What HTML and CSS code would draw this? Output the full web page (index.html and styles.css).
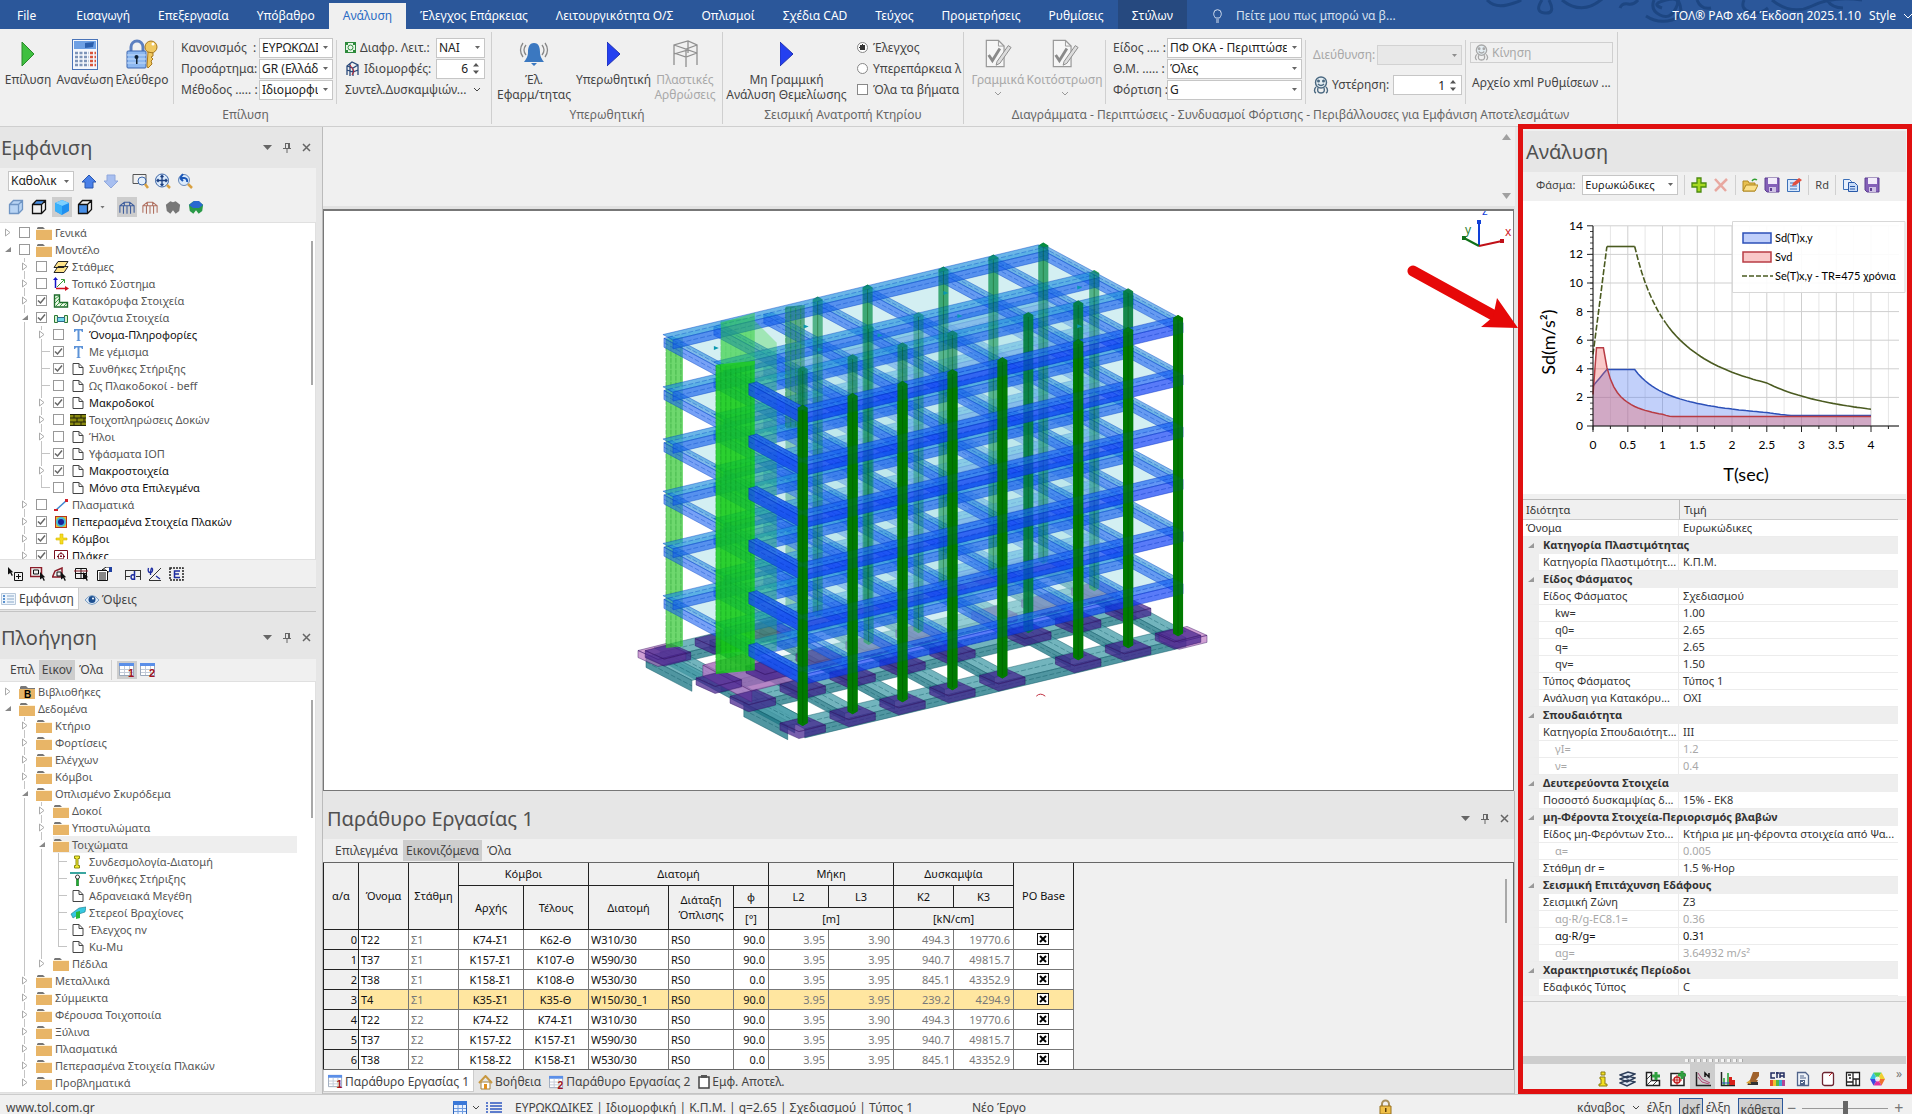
FILE: index.html
```html
<!DOCTYPE html>
<html lang="el">
<head>
<meta charset="utf-8">
<title>ΤΟΛ ΡΑΦ - Ανάλυση</title>
<link rel="stylesheet" href="styles.css">
</head>
<body>
<svg class="defs" aria-hidden="true">
  <symbol id="folder" viewBox="0 0 16 14"><path d="M1 2l1-1h5l2 2h7v2H1z" fill="#777"/><path d="M0 4h16v10H0z" fill="#e8b567"/><path d="M0 3h16v1H0z" fill="#fff3dc"/></symbol>
  <symbol id="bfolder" viewBox="0 0 16 14"><path d="M1 2l1-1h5l2 2h7v2H1z" fill="#777"/><path d="M0 4h16v10H0z" fill="#e8b567"/><text x="5" y="13" font-size="10" font-weight="bold" font-family="Liberation Sans">B</text></symbol>
  <symbol id="page" viewBox="0 0 16 14"><path d="M3 1.500h6l4 4v7H3zM9 1.500v4h4" fill="#fff" stroke="#444"/></symbol>
  <symbol id="tee" viewBox="0 0 16 14"><path d="M4 1h9v3h-1l-1-1.500H9.500V12l1.500 1H6l1.500-1V2.500H6L5 4H4z" fill="#5d93d8"/></symbol>
  <symbol id="levels" viewBox="0 0 16 14"><path d="M5 6.500h10l-4 6H1zM5 1.500h10l-4 6H1z" fill="#ffe48a" stroke="#222"/></symbol>
  <symbol id="axes" viewBox="0 0 16 14"><path d="M2.500 2v9" stroke="#1414c8" stroke-width="1.500"/><path d="M0 3l2.500-3L5 3z" fill="#1414c8"/><path d="M3 11.500h10" stroke="#d01020" stroke-width="1.500"/><path d="M12 9l4 2.500-4 2.500z" fill="#d01020"/><path d="M4 10l7-7M8 2.500h3.500V6" stroke="#3a9a3a" fill="none"/></symbol>
  <symbol id="lwall" viewBox="0 0 16 14"><path d="M1.500 1h5v7.500h8V13h-13z" fill="#e9f7e4" stroke="#1d6b2b" stroke-width="1.400"/><path d="M2 5l4-3M2 9l4-4M3 12l4-4M7 12l3-3M11 12l3-3" stroke="#3c9a46"/></symbol>
  <symbol id="hbeam" viewBox="0 0 16 14"><path d="M1.500 4.500h3v7h-3zM11.500 4.500h3v7h-3z" fill="#d9f2cf" stroke="#2c7a35"/><path d="M4.500 6.500h7v4h-7z" fill="#6fd8ea" stroke="#2c6b8a"/></symbol>
  <symbol id="brick" viewBox="0 0 16 14"><path d="M0 1h16v12H0z" fill="#8a8a10"/><path d="M0 1.500h16M0 5h16M0 9h16M0 12.500h16M4 1v4M11 1v4M7 5v4M14 5v4M4 9v4M11 9v4" stroke="#222208"/></symbol>
  <symbol id="link" viewBox="0 0 16 14"><path d="M3 12L14 2" stroke="#3f86d0" stroke-width="1.500"/><path d="M1 11h4v2H1zM12 1h3v3h-3z" fill="#d0202a"/></symbol>
  <symbol id="fem" viewBox="0 0 16 14"><path d="M2 1h12v12H2z" fill="#b5341c"/><path d="M3 2h10v10H3z" fill="#e8c02a"/><circle cx="8" cy="7" r="5" fill="#44b7d8"/><circle cx="8" cy="7" r="3" fill="#16219a"/></symbol>
  <symbol id="plusy" viewBox="0 0 16 14"><path d="M7 2h3v4h4v2h-4v4H7V8H3V6h4z" fill="#f5dc20" stroke="#d8b800" stroke-width=".6"/></symbol>
  <symbol id="slab" viewBox="0 0 16 14"><path d="M1.500 1.500h13v12h-13z" fill="#fff" stroke="#7a1020"/><circle cx="8" cy="7.500" r="3" fill="none" stroke="#7a1020"/><path d="M8 3v9M4 7.500h8" stroke="#7a1020" stroke-dasharray="2 1"/></symbol>
  <symbol id="isec" viewBox="0 0 16 14"><path d="M4.500 1h5v2.500h-1.500v7h1.500V13h-5v-2.500H6v-7H4.500z" fill="#f4ec30" stroke="#8a8a10"/></symbol>
  <symbol id="support" viewBox="0 0 16 14"><path d="M0 0h16v2H0z" fill="#3aa6a0"/><path d="M6.500 7h2v7h-2z" fill="#20b030" stroke="#107020" stroke-width=".6"/><circle cx="7.500" cy="5" r="2" fill="#fff" stroke="#333"/></symbol>
  <symbol id="rigid" viewBox="0 0 16 14"><path d="M1 8l8-6 7-1-1 5-6 2-6 4z" fill="#36c8e0" stroke="#187888" stroke-width=".6"/><path d="M6 6l4-1v7l-4 1z" fill="#25b838"/></symbol>
  <symbol id="sheet" viewBox="0 0 16 16"><path d="M.5 1.500h14v12H.5z" fill="#fff" stroke="#9aa8bb"/><path d="M0 1h15v3H0z" fill="#5b8fe8"/><path d="M1 7.500h13M1 10.500h13M5.500 4v9M10.500 4v9" stroke="#c3cbd8"/></symbol>
  <symbol id="sheetblue" viewBox="0 0 14 14"><path d="M.5.500h13v13H.5z" fill="#eaf2fe" stroke="#2c62b8"/><path d="M0 0h14v4H0z" fill="#3a78d8"/><path d="M1 7.500h12M1 10.500h12M5 4v9M9.500 4v9" stroke="#6f9ce0"/></symbol>
  <symbol id="sheet1" viewBox="0 0 16 16"><use href="#sheet"/><text x="9" y="15" font-size="11" font-weight="bold" fill="#a01420" font-family="Liberation Sans">1</text></symbol>
  <symbol id="sheet2" viewBox="0 0 16 16"><use href="#sheet"/><text x="9" y="15" font-size="11" font-weight="bold" fill="#a01420" font-family="Liberation Sans">2</text></symbol>
  <symbol id="cube" viewBox="0 0 16 16"><path d="M1.500 5.500l4-4h9v9l-4 4h-9zM1.500 5.500h9v9M10.500 5.500l4-4" stroke-width="1.300"/></symbol>
  <symbol id="floppy" viewBox="0 0 16 16"><path d="M1 1h14v14H3l-2-2z" fill="#8460b8" stroke="#5c3f90"/><path d="M4 1h9v6H4z" fill="#f2ecfa"/><path d="M5 10h7v5H5z" fill="#cfc2e4"/><path d="M6 11h2v3H6z" fill="#5c3f90"/></symbol>
  <symbol id="sheetpen" viewBox="0 0 30 32"><path d="M2.500 1.500h13l6 6v22h-19z" fill="#f6f6f6" stroke="#999" stroke-width="1.300"/><path d="M15.500 1.500v6h6" fill="none" stroke="#999"/><path d="M5 17l4 6 8-13" fill="none" stroke="#8a8a8a" stroke-width="3"/><path d="M14 24L26 7l3 2-12 17-4 2z" fill="#ddd" stroke="#888"/></symbol>
  <symbol id="ghost" viewBox="0 0 16 18"><circle cx="8" cy="6.500" r="5.500" fill="#e4edf2" stroke="currentColor" stroke-width="1.400"/><circle cx="5.500" cy="5" r="1.500" fill="currentColor"/><circle cx="10.500" cy="5" r="1.500" fill="currentColor"/><path d="M5 8c2 2 4 2 6 0M3 11c-2 2-2 5 0 6M13 11c2 2 2 5 0 6M5 12c-1 3 0 5 3 5s4-2 3-5" stroke="currentColor" fill="none" stroke-width="1.400"/></symbol>
  <symbol id="pin" viewBox="0 0 10 12"><path d="M3 1.500h4M3.500 1v5M6.500 1v5M7.500 1v5M1 6.500h8M5 7v4" stroke="#666" fill="none"/></symbol>
  <symbol id="shell" viewBox="0 0 18 16"><path d="M1 5l5-4 3 1 3-1 5 4-1 7-4 3-3-4-3 4-4-3z"/></symbol>
  <symbol id="frame" viewBox="0 0 18 16"><path d="M1 14V6l5-4h6l5 4v8M1 6h16M6 2v4M12 2v4M5 6v9M9 6v9M13 6v9" fill="none" stroke-width="1.200"/></symbol>
  <symbol id="cursor" viewBox="0 0 8 12"><path d="M0 0l7 7H4.500l2 4-1.500 1-2-4L0 10z" fill="#111"/></symbol>
</svg>

<header class="topbar">
  <svg class="swirl" viewBox="0 0 430 29" aria-hidden="true"><g fill="none" stroke="#1d4682" stroke-width="3"><path d="M5 0q8 8 20 5t14-5M60 0q-8 12 3 13t4-13M80 0q20 16 40-1M138 8q2-5 8-4t10-4M172 0q-4 10 6 15t16-7-10-8-4 8M196 0q8 16-6 20t-26-4M215 0q4 10 14 8M262 0q-4 9 6 12t18-4M290 0q20 16 40 6t50-6M345 0q5 8 16 8"/></g></svg>
  <nav class="tabs">
    <button class="file">File</button><button>Εισαγωγή</button><button>Επεξεργασία</button><button>Υπόβαθρο</button><button class="active">Ανάλυση</button><button>Έλεγχος Επάρκειας</button><button>Λειτουργικότητα Ο/Σ</button><button>Οπλισμοί</button><button>Σχέδια CAD</button><button>Τεύχος</button><button>Προμετρήσεις</button><button>Ρυθμίσεις</button><button class="context">Στύλων</button>
  </nav>
  <label class="tell"><svg width="9" height="14" viewBox="0 0 9 14"><path d="M2.500 9C1 7 .7 6 .7 4.500a3.800 3.800 0 017.600 0C8.300 6 8 7 6.500 9zM3 11h3M3 13h3" fill="none" stroke="#d5e0f0"/></svg><input type="text" value="Πείτε μου πως μπορώ να β..." aria-label="Αναζήτηση"></label>
  <div class="product"><span>ΤΟΛ® ΡΑΦ x64 Έκδοση 2025.1.10</span><button>Style</button><svg width="8" height="8" viewBox="0 0 8 8"><path d="M0 2l4 4 4-4" fill="none" stroke="#fff"/></svg></div>
</header>

<section class="ribbon" aria-label="Κορδέλα">
  <div class="group g1">
    <div class="group-body">
      <button class="big w56"><svg width="14" height="26" viewBox="0 0 14 26"><path d="M1 1l12 12L1 25z" fill="#3fc040" stroke="#2a8a2a"/></svg><span>Επίλυση</span></button>
      <button class="big w60"><svg width="26" height="31" viewBox="0 0 26 31"><rect x=".5" y=".5" width="25" height="30" fill="#f4f7fc" stroke="#4a74b8"/><path d="M2 2h22v8H2z" fill="#6ea0e4"/><path d="M13 4l9-1-1 5-8 1z" fill="#2b5fae"/><g stroke-width="2.500" stroke-dasharray="3 1.500"><path d="M3 14h14M3 18h14M3 22h14M3 26h14" stroke="#7d94b8"/><path d="M18 14h6M18 18h6M18 22h6M18 26h6" stroke="#d8543c"/></g></svg><span>Ανανέωση</span></button>
      <button class="big w54"><svg width="32" height="31" viewBox="0 0 32 31"><path d="M5 13V8a6 6 0 0112 0v5" fill="none" stroke="#5b7fc0" stroke-width="3"/><rect x="1" y="12" width="19" height="17" rx="1" fill="#8db8f0" stroke="#3c66b0"/><path d="M1 16h19M1 20h19M1 24h19" stroke="#c4dcfa"/><circle cx="10.500" cy="18" r="2" fill="#123"/><path d="M10 18h1.500v7H10z" fill="#123"/><circle cx="25" cy="8" r="6" fill="#f0c860" stroke="#a8781c"/><circle cx="27" cy="5" r="1.500" fill="#fff"/><path d="M22 13l5 1v3l-2 1 2 2-2 2 1 3-4 4-1-2z" fill="#f0c860" stroke="#a8781c"/></svg><span>Ελεύθερο</span></button>
      <i class="sep"></i>
      <div class="fields f1">
        <label for="reg">Κανονισμός&nbsp; :</label><select id="reg"><option>ΕΥΡΩΚΩΔΙΚΕΣ</option></select>
        <label for="app">Προσάρτημα:</label><select id="app"><option>GR (Ελλάδα)</option></select>
        <label for="met">Μέθοδος ..... :</label><select id="met"><option>Ιδιομορφική</option></select>
      </div>
      <i class="sep"></i>
      <div class="fields f2">
        <label for="dia"><svg width="11" height="11" viewBox="0 0 11 11"><path d="M.5.5h10v10H.5z" fill="#e8f6e8" stroke="#2d8a3c"/><circle cx="5.500" cy="5.500" r="2.500" fill="none" stroke="#2d8a3c"/><path d="M0 0h3v3H0zM8 0h3v3H8zM0 8h3v3H0zM8 8h3v3H8z" fill="#2d8a3c"/></svg>Διαφρ. Λειτ.:</label><select id="dia"><option>ΝΑΙ</option></select>
        <label for="modes"><svg width="15" height="16" viewBox="0 0 15 16"><path d="M2 14V5l5-4 6 3v10M2 5l6 2 5-3M8 7v8M5 2v13M2 9l6 2 5-2" fill="none" stroke="#2a4a7a" stroke-width="1.300"/><path d="M5 4l4 6-2 4" fill="none" stroke="#c02030"/></svg>Ιδιομορφές:</label><input id="modes" class="spin" value="6">
        <button class="drop">Συντελ.Δυσκαμψιών...<svg width="8" height="6" viewBox="0 0 8 6"><path d="M1 1l3 3 3-3" fill="none" stroke="#444"/></svg></button>
      </div>
    </div>
    <h2>Επίλυση</h2>
  </div>
  <div class="group g2">
    <div class="group-body">
      <button class="big w80"><svg width="30" height="26" viewBox="0 0 30 26"><path d="M15 2c5 0 6 5 6 9 0 5 2 7 4 10H5c2-3 4-5 4-10 0-4 1-9 6-9zM12 22h6l-3 3z" fill="#3b78c0"/><path d="M7 4q-4 5 0 10M4 2q-5 7 0 14M23 4q4 5 0 10M26 2q5 7 0 14" fill="none" stroke="#888" stroke-width="1.300"/></svg><span>Έλ.<br>Εφαρμ/τητας</span></button>
      <button class="big w78"><svg width="13" height="26" viewBox="0 0 13 26"><path d="M0 1l13 12L0 25z" fill="#2440f0" stroke="#2030b0"/></svg><span>Υπερωθητική</span></button>
      <button class="big w64" disabled><svg width="26" height="28" viewBox="0 0 26 28"><path d="M2 25V5L16 1l9 4v20M2 5l12 4 11-4M14 9v18M2 13l12 4 11-4M16 1v12M2 14l14-4 9 3" fill="none" stroke="#909090" stroke-width="1.300"/></svg><span>Πλαστικές<br>Αρθρώσεις</span></button>
    </div>
    <h2>Υπερωθητική</h2>
  </div>
  <div class="group g3">
    <div class="group-body">
      <button class="big w126"><svg width="13" height="26" viewBox="0 0 13 26"><path d="M0 1l13 12L0 25z" fill="#2440f0" stroke="#2030b0"/></svg><span>Μη Γραμμική<br>Ανάλυση Θεμελίωσης</span></button>
      <div class="radios">
        <label><input type="radio" name="m" checked>Έλεγχος</label>
        <label><input type="radio" name="m">Υπερεπάρκεια λ</label>
        <label><input type="checkbox">Όλα τα βήματα</label>
      </div>
    </div>
    <h2>Σεισμική Ανατροπή Κτηρίου</h2>
  </div>
  <div class="group g4">
    <div class="group-body">
      <button class="big w60" disabled><svg width="28" height="30"><use href="#sheetpen"/></svg><span>Γραμμικά</span><svg width="8" height="6" viewBox="0 0 8 6"><path d="M1 1l3 3 3-3" fill="none" stroke="#999"/></svg></button>
      <button class="big w78" disabled><svg width="28" height="30"><use href="#sheetpen"/></svg><span>Κοιτόστρωση</span><svg width="8" height="6" viewBox="0 0 8 6"><path d="M1 1l3 3 3-3" fill="none" stroke="#999"/></svg></button>
      <i class="sep"></i>
      <div class="fields f3">
        <label for="kind">Είδος .... :</label><select id="kind"><option>ΠΦ ΟΚΑ - Περιπτώσεις</option></select>
        <label for="thm">Θ.Μ. ..... :</label><select id="thm"><option>Όλες</option></select>
        <label for="load">Φόρτιση :</label><select id="load"><option>G</option></select>
      </div>
      <i class="sep"></i>
      <div class="fields f4">
        <label for="dir" class="off">Διεύθυνση:</label><select id="dir" disabled><option></option></select>
        <label for="hys"><svg class="ghost" width="16" height="18"><use href="#ghost"/></svg>Υστέρηση:</label><input id="hys" class="spin" value="1">
      </div>
      <i class="sep"></i>
      <div class="stack">
        <button class="move" disabled><svg width="15" height="17"><use href="#ghost"/></svg>Κίνηση</button>
        <button class="xml">Αρχείο xml Ρυθμίσεων ...</button>
      </div>
    </div>
    <h2>Διαγράμματα - Περιπτώσεις - Συνδυασμοί Φόρτισης - Περιβάλλουσες για Εμφάνιση Αποτελεσμάτων</h2>
  </div>
</section>

<main class="work">
  <aside class="left">
    <section class="pane view-pane">
      <header class="pane-title"><h1>Εμφάνιση</h1><div class="ctl"><button aria-label="Μενού" class="tri"></button><button aria-label="Καρφίτσωμα"><svg width="10" height="12"><use href="#pin"/></svg></button><button aria-label="Κλείσιμο"><svg width="9" height="9" viewBox="0 0 9 9"><path d="M1 1l7 7M8 1L1 8" stroke="#666" stroke-width="1.500"/></svg></button></div></header>
      <div class="tools">
        <div class="tool-row">
          <select class="scope" aria-label="Εύρος"><option>Καθολικ</option></select>
          <button><svg width="16" height="15" viewBox="0 0 16 15"><path d="M8 1l7 7h-3v6H4V8H1z" fill="#4a80e8" stroke="#2a58b0"/></svg></button>
          <button><svg width="16" height="15" viewBox="0 0 16 15"><path d="M8 14l7-7h-3V1H4v6H1z" fill="#a8bff0" stroke="#90a8dc"/></svg></button>
          <button class="gap8"><svg width="17" height="16" viewBox="0 0 17 16"><path d="M1 1.500h13v9H1z" fill="none" stroke="#555"/><circle cx="10" cy="8" r="4" fill="#e4f0fc" stroke="#3c66a8"/><path d="M13 11l3 4" stroke="#d8a040" stroke-width="2.500"/></svg></button>
          <button><svg width="17" height="16" viewBox="0 0 17 16"><circle cx="8" cy="7.500" r="6.500" fill="#dcebfc" stroke="#3c66a8"/><path d="M8 2.500v10M3 7.500h10M6.500 4L8 2.500 9.500 4M6.500 11L8 12.500 9.500 11M4.500 6L3 7.500 4.500 9M11.500 6L13 7.500 11.500 9" stroke="#1c3f80" stroke-width="1.300" fill="none"/><path d="M13 12l3 3" stroke="#d8a040" stroke-width="2.500"/></svg></button>
          <button><svg width="17" height="16" viewBox="0 0 17 16"><circle cx="8" cy="7" r="5.500" fill="#dcebfc" stroke="#6888b8"/><path d="M4 5h4a3 3 0 013 4M4 5l3-4M4 5l3 3" stroke="#1c58b8" stroke-width="2" fill="none"/><path d="M12 11l4 4" stroke="#d8a040" stroke-width="2.500"/></svg></button>
        </div>
        <div class="tool-row cubes">
          <button><svg width="16" height="16" fill="#b8d4f4" stroke="#6f95c4"><use href="#cube"/></svg></button>
          <button><svg width="16" height="16" fill="none" stroke="#111"><path d="M2 5l4-3h8l-4 3z" fill="#4890e8" stroke="none"/><use href="#cube"/></svg></button>
          <button class="on"><svg width="18" height="17" viewBox="0 0 18 17"><path d="M9 1l7 3v8l-7 4-7-4V4z" fill="#1f90f0"/><path d="M9 1l7 3-7 3-7-3z" fill="#7cd0ff"/><path d="M2 4l7 3v9l-7-4z" fill="#38b0fa"/></svg></button>
          <button><svg width="16" height="16" fill="none" stroke="#111"><path d="M2 6h9v9H2z" fill="#4890e8" stroke="none"/><use href="#cube"/></svg></button>
          <i class="tiny"></i>
          <button class="on gap8"><svg width="16" height="15" stroke="#3c5c9c"><use href="#frame"/></svg></button>
          <button><svg width="16" height="15" stroke="#b07060"><use href="#frame"/></svg></button>
          <button><svg width="16" height="15" fill="#777"><use href="#shell"/></svg></button>
          <button><svg width="16" height="15" fill="#2a9a48"><use href="#shell"/><path d="M1 5l5-4h5l4 4-4 3H5z" fill="#2a68d0"/></svg></button>
        </div>
      </div>
      <div class="tree view-tree">
        <ul>
          <li><i class="tw c"></i><label><input type="checkbox"><svg><use href="#folder"/></svg>Γενικά</label></li>
          <li><i class="tw o"></i><label><input type="checkbox"><svg><use href="#folder"/></svg>Μοντέλο</label>
            <ul>
              <li><i class="tw c"></i><label><input type="checkbox"><svg><use href="#levels"/></svg>Στάθμες</label></li>
              <li><i class="tw c"></i><label><input type="checkbox"><svg><use href="#axes"/></svg>Τοπικό Σύστημα</label></li>
              <li><i class="tw c"></i><label><input type="checkbox" checked><svg><use href="#lwall"/></svg>Κατακόρυφα Στοιχεία</label></li>
              <li><i class="tw o"></i><label><input type="checkbox" checked><svg><use href="#hbeam"/></svg>Οριζόντια Στοιχεία</label>
                <ul>
                  <li><i class="tw c"></i><label class="dark"><input type="checkbox"><svg><use href="#tee"/></svg>Όνομα-Πληροφορίες</label></li>
                  <li><i class="tw l"></i><label><input type="checkbox" checked><svg><use href="#tee"/></svg>Με γέμισμα</label></li>
                  <li><i class="tw l"></i><label><input type="checkbox" checked><svg><use href="#page"/></svg>Συνθήκες Στήριξης</label></li>
                  <li><i class="tw l"></i><label><input type="checkbox"><svg><use href="#page"/></svg>Ως Πλακοδοκοί - beff</label></li>
                  <li><i class="tw c"></i><label class="dark"><input type="checkbox" checked><svg><use href="#page"/></svg>Μακροδοκοί</label></li>
                  <li><i class="tw c"></i><label><input type="checkbox"><svg><use href="#brick"/></svg>Τοιχοπληρώσεις Δοκών</label></li>
                  <li><i class="tw c"></i><label><input type="checkbox"><svg><use href="#page"/></svg>Ήλοι</label></li>
                  <li><i class="tw l"></i><label><input type="checkbox" checked><svg><use href="#page"/></svg>Υφάσματα ΙΟΠ</label></li>
                  <li><i class="tw c"></i><label class="dark"><input type="checkbox" checked><svg><use href="#page"/></svg>Μακροστοιχεία</label></li>
                  <li><i class="tw l"></i><label class="dark"><input type="checkbox"><svg><use href="#page"/></svg>Μόνο στα Επιλεγμένα</label></li>
                </ul>
              </li>
              <li><i class="tw c"></i><label><input type="checkbox"><svg><use href="#link"/></svg>Πλασματικά</label></li>
              <li><i class="tw c"></i><label class="dark"><input type="checkbox" checked><svg><use href="#fem"/></svg>Πεπερασμένα Στοιχεία Πλακών</label></li>
              <li><i class="tw c"></i><label class="dark"><input type="checkbox" checked><svg><use href="#plusy"/></svg>Κόμβοι</label></li>
              <li><i class="tw c"></i><label class="dark"><input type="checkbox" checked><svg><use href="#slab"/></svg>Πλάκες</label></li>
            </ul>
          </li>
        </ul>
      </div>
      <div class="select-tools">
        <button><svg width="16" height="14" viewBox="0 0 16 14"><use href="#cursor" width="6" height="9"/><path d="M6.500 5.500h8v8h-8zM10.500 7v5M8 9.500h5" fill="none" stroke="#111"/></svg></button>
        <button><svg width="16" height="14" viewBox="0 0 16 14"><path d="M.5.500h11v9H.5z" fill="none" stroke="#8a1c28" stroke-width="1.500"/><path d="M3.500 3h5v4h-5z" fill="none" stroke="#111"/><use href="#cursor" x="10" y="5" width="6" height="9"/></svg></button>
        <button><svg width="16" height="14" viewBox="0 0 16 14"><path d="M.5 10L3 4l7-3v9z" fill="none" stroke="#8a1c28" stroke-width="1.500"/><path d="M5 5h4v4H5z" fill="none" stroke="#111"/><use href="#cursor" x="9" y="5" width="6" height="9"/></svg></button>
        <button><svg width="16" height="14" viewBox="0 0 16 14"><path d="M1.500 1.500h11v10h-11zM1.500 6.500h11M7 1.500v10" fill="none" stroke="#111"/><path d="M0 4h14" stroke="#8a1c28"/><use href="#cursor" x="9" y="5" width="6" height="9"/></svg></button>
        <button><svg width="16" height="14" viewBox="0 0 16 14"><path d="M1.500 3.500h10v10h-10zM3 6h7M3 8h7M3 10h7M3 12h7" fill="#fff" stroke="#111"/><path d="M6 3l4-3h5v4l-3 1-2-2z" fill="#fff" stroke="#111"/><path d="M13 0h3v5h-3z" fill="#2040a0"/></svg></button>
        <button class="gap8"><svg width="16" height="14" viewBox="0 0 16 14"><path d="M.5 3v10M15.500 3v10M1 3.500h14M1 9.500h4M11 9.500h4" stroke="#333" fill="none"/><path d="M9.500 4v9M9 12c-4 2-4-6 0-4" stroke="#1c2ca0" stroke-width="1.500" fill="none"/></svg></button>
        <button><svg width="16" height="14" viewBox="0 0 16 14"><path d="M2 13L14 1M2 13.500h12" stroke="#333"/><path d="M1.500 1c-2 6 5 6 4 1-1-2-2 0-2 6M9 9l4 3" stroke="#1c2ca0" stroke-width="1.300" fill="none"/></svg></button>
        <button><svg width="16" height="14" viewBox="0 0 16 14"><path d="M1 1h13v12H1z" fill="none" stroke="#222" stroke-dasharray="2 1" stroke-width="1.500"/><path d="M11 4H5.500v6.500H11M5.500 7H10" stroke="#1c2ca0" stroke-width="1.500" fill="none"/></svg></button>
      </div>
      <div class="ptabs"><button class="active"><svg width="15" height="12" viewBox="0 0 15 12"><path d="M.5.500h14v11H.5z" fill="#eef5fc" stroke="#b8c8da"/><path d="M2 3h2M2 6h2M2 9h2" stroke="#2a70c0" stroke-width="1.500"/><path d="M6 3h7M6 6h7M6 9h7" stroke="#8aa8c8"/></svg>Εμφάνιση</button><button><svg width="14" height="12" viewBox="0 0 14 12"><path d="M0 6q7-9 14 0-7 9-14 0z" fill="#dceaf8" stroke="#7fa0c4"/><circle cx="7" cy="5.500" r="3.500" fill="#1d4f90"/><circle cx="8" cy="4.500" r="1" fill="#fff"/></svg>Όψεις</button></div>
    </section>
    <section class="pane nav-pane">
      <header class="pane-title"><h1>Πλοήγηση</h1><div class="ctl"><button aria-label="Μενού" class="tri"></button><button aria-label="Καρφίτσωμα"><svg width="10" height="12"><use href="#pin"/></svg></button><button aria-label="Κλείσιμο"><svg width="9" height="9" viewBox="0 0 9 9"><path d="M1 1l7 7M8 1L1 8" stroke="#666" stroke-width="1.500"/></svg></button></div></header>
      <div class="nav-tools"><button>Επιλ</button><button class="on">Εικον</button><button>Όλα</button><i class="sep"></i><button class="on ico"><svg width="16" height="16"><use href="#sheet1"/></svg></button><button class="ico"><svg width="16" height="16"><use href="#sheet2"/></svg></button></div>
      <div class="tree nav-tree">
        <ul>
          <li><i class="tw c"></i><a href="#"><svg><use href="#bfolder"/></svg>Βιβλιοθήκες</a></li>
          <li><i class="tw o"></i><a href="#"><svg><use href="#folder"/></svg>Δεδομένα</a>
            <ul>
              <li><i class="tw c"></i><a href="#"><svg><use href="#folder"/></svg>Κτήριο</a></li>
              <li><i class="tw c"></i><a href="#"><svg><use href="#folder"/></svg>Φορτίσεις</a></li>
              <li><i class="tw c"></i><a href="#"><svg><use href="#folder"/></svg>Ελέγχων</a></li>
              <li><i class="tw c"></i><a href="#"><svg><use href="#folder"/></svg>Κόμβοι</a></li>
              <li><i class="tw o"></i><a href="#"><svg><use href="#folder"/></svg>Οπλισμένο Σκυρόδεμα</a>
                <ul>
                  <li><i class="tw c"></i><a href="#"><svg><use href="#folder"/></svg>Δοκοί</a></li>
                  <li><i class="tw c"></i><a href="#"><svg><use href="#folder"/></svg>Υποστυλώματα</a></li>
                  <li><i class="tw o"></i><a href="#" class="sel"><svg><use href="#folder"/></svg>Τοιχώματα</a>
                    <ul>
                      <li><i class="tw l"></i><a href="#"><svg><use href="#isec"/></svg>Συνδεσμολογία-Διατομή</a></li>
                      <li><i class="tw l"></i><a href="#"><svg><use href="#support"/></svg>Συνθήκες Στήριξης</a></li>
                      <li><i class="tw l"></i><a href="#"><svg><use href="#page"/></svg>Αδρανειακά Μεγέθη</a></li>
                      <li><i class="tw l"></i><a href="#"><svg><use href="#rigid"/></svg>Στερεοί Βραχίονες</a></li>
                      <li><i class="tw l"></i><a href="#"><svg><use href="#page"/></svg>Έλεγχος nv</a></li>
                      <li><i class="tw l"></i><a href="#"><svg><use href="#page"/></svg>Ku-Mu</a></li>
                    </ul>
                  </li>
                  <li><i class="tw c"></i><a href="#"><svg><use href="#folder"/></svg>Πέδιλα</a></li>
                </ul>
              </li>
              <li><i class="tw c"></i><a href="#"><svg><use href="#folder"/></svg>Μεταλλικά</a></li>
              <li><i class="tw c"></i><a href="#"><svg><use href="#folder"/></svg>Σύμμεικτα</a></li>
              <li><i class="tw c"></i><a href="#"><svg><use href="#folder"/></svg>Φέρουσα Τοιχοποιία</a></li>
              <li><i class="tw c"></i><a href="#"><svg><use href="#folder"/></svg>Ξύλινα</a></li>
              <li><i class="tw c"></i><a href="#"><svg><use href="#folder"/></svg>Πλασματικά</a></li>
              <li><i class="tw c"></i><a href="#"><svg><use href="#folder"/></svg>Πεπερασμένα Στοιχεία Πλακών</a></li>
              <li><i class="tw c"></i><a href="#"><svg><use href="#folder"/></svg>Προβληματικά</a></li>
            </ul>
          </li>
        </ul>
      </div>
    </section>
  </aside>

  <section class="center">
    <div class="strip"><i class="up"></i><i class="down"></i></div>
    <div class="canvas">
      <svg id="model" viewBox="0 0 1188 580" preserveAspectRatio="xMidYMid meet" role="img" aria-label="Τρισδιάστατο προσομοίωμα κτηρίου"></svg>
      <svg class="triad" width="58" height="40" viewBox="0 0 58 40"><path d="M24 35V12" stroke="#1040d8" stroke-width="2"/><path d="M22 9h4v4h-4z" fill="#1040d8"/><path d="M24 35L9 27" stroke="#107018" stroke-width="2"/><path d="M7 25h4v4H7z" fill="#107018"/><path d="M24 35l23-5" stroke="#c01018" stroke-width="2"/><path d="M45 28h4v4h-4z" fill="#c01018"/><text x="10" y="23" fill="#2a8030">y</text><text x="50" y="25" fill="#d02028">x</text><text x="27" y="4" fill="#1040d8">z</text></svg>
    </div>
    <section class="workwin">
      <header class="pane-title"><h1>Παράθυρο Εργασίας 1</h1><div class="ctl"><button aria-label="Μενού" class="tri"></button><button aria-label="Καρφίτσωμα"><svg width="10" height="12"><use href="#pin"/></svg></button><button aria-label="Κλείσιμο"><svg width="9" height="9" viewBox="0 0 9 9"><path d="M1 1l7 7M8 1L1 8" stroke="#666" stroke-width="1.500"/></svg></button></div></header>
      <div class="ww-tools"><button>Επιλεγμένα</button><button class="on">Εικονιζόμενα</button><button>Όλα</button></div>
      <div class="grid-wrap">
        <table class="grid">
          <colgroup><col class="c35"><col class="c50"><col class="c50"><col class="c65"><col class="c65"><col class="c80"><col class="c65"><col class="c35"><col class="c60"><col class="c65"><col class="c60"><col class="c60"><col class="c60"></colgroup>
          <thead>
            <tr><th rowspan="3">α/α</th><th rowspan="3">Όνομα</th><th rowspan="3">Στάθμη</th><th colspan="2">Κόμβοι</th><th colspan="3">Διατομή</th><th colspan="2">Μήκη</th><th colspan="2">Δυσκαμψία</th><th rowspan="3">PO Base</th></tr>
            <tr><th rowspan="2">Αρχής</th><th rowspan="2">Τέλους</th><th rowspan="2">Διατομή</th><th rowspan="2">Διάταξη Όπλισης</th><th>φ</th><th>L2</th><th>L3</th><th>K2</th><th>K3</th></tr>
            <tr><th>[°]</th><th colspan="2">[m]</th><th colspan="2">[kN/cm]</th></tr>
          </thead>
          <tbody>
            <tr><th>0</th><td>T22</td><td>Σ1</td><td>K74-Σ1</td><td>K62-Θ</td><td>W310/30</td><td>RS0</td><td>90.0</td><td>3.95</td><td>3.90</td><td>494.3</td><td>19770.6</td><td><input type="checkbox" checked aria-label="PO Base 0"></td></tr>
            <tr><th>1</th><td>T37</td><td>Σ1</td><td>K157-Σ1</td><td>K107-Θ</td><td>W590/30</td><td>RS0</td><td>90.0</td><td>3.95</td><td>3.95</td><td>940.7</td><td>49815.7</td><td><input type="checkbox" checked aria-label="PO Base 1"></td></tr>
            <tr><th>2</th><td>T38</td><td>Σ1</td><td>K158-Σ1</td><td>K108-Θ</td><td>W530/30</td><td>RS0</td><td>0.0</td><td>3.95</td><td>3.95</td><td>845.1</td><td>43352.9</td><td><input type="checkbox" checked aria-label="PO Base 2"></td></tr>
            <tr class="hot"><th>3</th><td>T4</td><td>Σ1</td><td>K35-Σ1</td><td>K35-Θ</td><td>W150/30_1</td><td>RS0</td><td>90.0</td><td>3.95</td><td>3.95</td><td>239.2</td><td>4294.9</td><td><input type="checkbox" checked aria-label="PO Base 3"></td></tr>
            <tr><th>4</th><td>T22</td><td>Σ2</td><td>K74-Σ2</td><td>K74-Σ1</td><td>W310/30</td><td>RS0</td><td>90.0</td><td>3.95</td><td>3.90</td><td>494.3</td><td>19770.6</td><td><input type="checkbox" checked aria-label="PO Base 4"></td></tr>
            <tr><th>5</th><td>T37</td><td>Σ2</td><td>K157-Σ2</td><td>K157-Σ1</td><td>W590/30</td><td>RS0</td><td>90.0</td><td>3.95</td><td>3.95</td><td>940.7</td><td>49815.7</td><td><input type="checkbox" checked aria-label="PO Base 5"></td></tr>
            <tr><th>6</th><td>T38</td><td>Σ2</td><td>K158-Σ2</td><td>K158-Σ1</td><td>W530/30</td><td>RS0</td><td>0.0</td><td>3.95</td><td>3.95</td><td>845.1</td><td>43352.9</td><td><input type="checkbox" checked aria-label="PO Base 6"></td></tr>
          </tbody>
        </table>
      </div>
      <div class="wtabs"><button class="active"><svg width="15" height="15"><use href="#sheet1"/></svg>Παράθυρο Εργασίας 1</button><button><svg width="15" height="15" viewBox="0 0 15 15"><path d="M3 7h9v7H3z" fill="#fff" stroke="#a08040"/><path d="M1 8l6.500-7L14 8" fill="none" stroke="#c89840" stroke-width="2"/><path d="M6 9h3v5H6z" fill="#e09020"/></svg>Βοήθεια</button><button><svg width="15" height="15"><use href="#sheet2"/></svg>Παράθυρο Εργασίας 2</button><button><svg width="12" height="14" viewBox="0 0 12 14"><path d="M1 2h10v11H1z" fill="#fff" stroke="#444" stroke-width="1.500"/><path d="M3 0h6v3H3z" fill="#555"/></svg>Εμφ. Αποτελ.</button></div>
    </section>
  </section>

  <aside class="right">
    <header class="pane-title"><h1>Ανάλυση</h1></header>
    <div class="an-tools">
      <label for="spec">Φάσμα:</label><select id="spec"><option>Ευρωκώδικες</option></select><i class="sep"></i>
      <button><svg width="16" height="16" viewBox="0 0 16 16"><path d="M6 1h4v5h5v4h-5v5H6v-5H1V6h5z" fill="#a6d820" stroke="#4c8a10" stroke-width="1.300"/></svg></button>
      <button><svg width="16" height="16" viewBox="0 0 16 16"><path d="M2 2l11 12M14 2L2 14" stroke="#e8a8a0" stroke-width="2.500"/></svg></button><i class="sep"></i>
      <button><svg width="16" height="16" viewBox="0 0 16 16"><path d="M1 4h5l1 2h6v8H1z" fill="#e8c050" stroke="#b08820"/><path d="M1 14l3-6h12l-3 6z" fill="#fbe08a" stroke="#b08820"/><path d="M10 4q2-3 5-1" stroke="#30a030" fill="none" stroke-width="1.500"/></svg></button>
      <button><svg width="16" height="16"><use href="#floppy"/></svg></button>
      <button><svg width="16" height="16" viewBox="0 0 16 16"><path d="M1.500 2.500h12v12h-12z" fill="#d8e8fc" stroke="#3c70b8"/><path d="M4 6h6M4 9h7M4 12h7" stroke="#3c70b8"/><path d="M6 9l1-3 6-5 3 2-6 5z" fill="#e05040"/></svg></button><i class="sep"></i>
      <button class="rd">Rd</button><i class="sep"></i>
      <button><svg width="16" height="16" viewBox="0 0 16 16"><path d="M1.500 2.500h6l2 2v8h-8z" fill="#e8f0fc" stroke="#3c70b8"/><path d="M6.500 5.500h6l3 3v6h-9z" fill="#c8dcf8" stroke="#2858a8"/><path d="M8 9.500h5M8 12h5" stroke="#2858a8"/></svg></button>
      <button><svg width="16" height="16"><use href="#floppy"/></svg></button>
    </div>
    <div class="chart"><svg id="chart" viewBox="0 0 382 293" preserveAspectRatio="xMinYMid meet" role="img" aria-label="Φάσμα Sd(T)"></svg></div>
    <div class="props-wrap"><table class="props">
      <colgroup><col class="pk"><col></colgroup>
      <thead><tr><th>Ιδιότητα</th><th>Τιμή</th></tr></thead>
      <tbody>
        <tr class="root"><td>Όνομα</td><td>Ευρωκώδικες</td></tr>
        <tr class="cat"><th colspan="2">Κατηγορία Πλαστιμότητας</th></tr>
        <tr><td>Κατηγορία Πλαστιμότητ...</td><td>Κ.Π.Μ.</td></tr>
        <tr class="cat"><th colspan="2">Είδος Φάσματος</th></tr>
        <tr><td>Είδος Φάσματος</td><td>Σχεδιασμού</td></tr>
        <tr class="sub"><td>kw=</td><td>1.00</td></tr>
        <tr class="sub"><td>q0=</td><td>2.65</td></tr>
        <tr class="sub"><td>q=</td><td>2.65</td></tr>
        <tr class="sub"><td>qv=</td><td>1.50</td></tr>
        <tr><td>Τύπος Φάσματος</td><td>Τύπος 1</td></tr>
        <tr><td>Ανάλυση για Κατακόρυ...</td><td>ΟΧΙ</td></tr>
        <tr class="cat"><th colspan="2">Σπουδαιότητα</th></tr>
        <tr><td>Κατηγορία Σπουδαιότητ...</td><td>III</td></tr>
        <tr class="sub dim"><td>γI=</td><td>1.2</td></tr>
        <tr class="sub dim"><td>ν=</td><td>0.4</td></tr>
        <tr class="cat"><th colspan="2">Δευτερεύοντα Στοιχεία</th></tr>
        <tr><td>Ποσοστό δυσκαμψίας δ...</td><td>15% - EK8</td></tr>
        <tr class="cat"><th colspan="2">μη-Φέροντα Στοιχεία-Περιορισμός βλαβών</th></tr>
        <tr><td>Είδος μη-Φερόντων Στο...</td><td>Κτήρια με μη-φέροντα στοιχεία από Ψα...</td></tr>
        <tr class="sub dim"><td>α=</td><td>0.005</td></tr>
        <tr><td>Στάθμη dr =</td><td>1.5 %·Hορ</td></tr>
        <tr class="cat"><th colspan="2">Σεισμική Επιτάχυνση Εδάφους</th></tr>
        <tr><td>Σεισμική Ζώνη</td><td>Z3</td></tr>
        <tr class="sub dim"><td>αg·R/g-EC8.1=</td><td>0.36</td></tr>
        <tr class="sub strong"><td>αg·R/g=</td><td>0.31</td></tr>
        <tr class="sub dim"><td>αg=</td><td>3.64932 m/s²</td></tr>
        <tr class="cat"><th colspan="2">Χαρακτηριστικές Περίοδοι</th></tr>
        <tr><td>Εδαφικός Τύπος</td><td>C</td></tr>
      </tbody>
    </table></div>
    <div class="filler"></div>
    <div class="grip"></div>
    <div class="iconbar">
      <button><svg width="16" height="16" viewBox="0 0 16 16"><path d="M6 1h4v3H6zM5 6h5v7h2v2H4v-2h2V8H5z" fill="#f4e020" stroke="#8a7c10"/></svg></button>
      <button><svg width="17" height="16" viewBox="0 0 17 16"><path d="M1 12l8-3 7 2-8 4zM1 8l8-3 7 2-8 4zM1 4l8-3 7 2-8 4z" fill="#dfe7f2" stroke="#2c3c58" stroke-width="1.400"/></svg></button>
      <button><svg width="16" height="16" viewBox="0 0 16 16"><path d="M1.500 1.500h5v8h8v5h-13z" fill="#fff" stroke="#222" stroke-width="1.500"/><path d="M2 8l4-4M2 14l5-5M8 14l4-4" stroke="#444"/><path d="M11 1v8M7 5h8" stroke="#30a040" stroke-width="3"/></svg></button>
      <button><svg width="16" height="16" viewBox="0 0 16 16"><path d="M1 2.500h13v12H1z" fill="#fff" stroke="#222" stroke-width="1.500"/><circle cx="7" cy="9" r="3" fill="none" stroke="#c02020" stroke-width="1.500"/><path d="M7 4v10M2 9h10" stroke="#c02020"/><path d="M12 0v8M8 4h8" stroke="#30a040" stroke-width="3"/></svg></button>
      <button class="on"><svg width="16" height="16" viewBox="0 0 16 16"><path d="M1.500 1v13.500H16" fill="none" stroke="#222" stroke-width="1.500"/><path d="M3 2l4 6 8 4M3 6l4 5 7 2" fill="none" stroke="#b04878"/><path d="M10 6V2l4 4V2" fill="none" stroke="#111" stroke-width="1.500"/></svg></button>
      <button><svg width="16" height="16" viewBox="0 0 16 16"><path d="M1.500 1v13.500H15" fill="none" stroke="#222" stroke-width="1.500"/><path d="M8 2v12M4 7v7" stroke="#20a030" stroke-width="1.500"/><path d="M9 6h3v8H9zM12 9h3v5h-3z" fill="#d82018"/><path d="M2 12h8" stroke="#2040c0"/></svg></button>
      <button><svg width="16" height="16" viewBox="0 0 16 16"><path d="M8 1h6v4l-3 4h2l-2 4H5L2 14l3-5z" fill="#a0622c"/><path d="M3 11h10v3H3z" fill="#333"/><path d="M1 12l4-3 1 4z" fill="#d8a030"/></svg></button>
      <button><svg width="17" height="16" viewBox="0 0 17 16"><path d="M6 2H2v5h4M8 1v6M11 7V2h4v5M11 5h4M7 2h3" fill="none" stroke="#222c60" stroke-width="1.500"/><path d="M1 9h3v6H1z" fill="#e05030"/><path d="M4 9h3v6H4z" fill="#f0c030"/><path d="M7 9h3v6H7z" fill="#50b848"/><path d="M10 9h3v6h-3z" fill="#38a8d8"/><path d="M13 9h3v6h-3z" fill="#b04898"/></svg></button>
      <button><svg width="16" height="16" viewBox="0 0 16 16"><path d="M2.500 1.500h8l3 3v10h-11z" fill="#eef2f8" stroke="#51648a" stroke-width="1.300"/><path d="M5 5h4M5 7h6" stroke="#51648a"/><path d="M5 9h5v5H5z" fill="#51648a"/><path d="M6 11l1 1 2-2" stroke="#fff" fill="none"/></svg></button>
      <button><svg width="16" height="16" viewBox="0 0 16 16"><rect x="2.500" y="1.500" width="11" height="13" rx="2" fill="#fff" stroke="#6c2430" stroke-width="1.300"/><path d="M9 5l3-3" stroke="#c02020"/></svg></button>
      <button><svg width="16" height="16" viewBox="0 0 16 16"><path d="M1.500 1.500h13v13h-13zM8 1.500v13M8 8h6M1.500 11h6M11 8v6M3 4h3M4 7h2" fill="#fff" stroke="#222" stroke-width="1.300"/></svg></button>
      <button><svg width="17" height="16" viewBox="0 0 17 16"><path d="M8.500 8L1 8l3.500-6.500z" fill="#38c0e0"/><path d="M8.500 8L4.500 1.500h8z" fill="#50d050"/><path d="M8.500 8l4-6.500L16 8z" fill="#f0d030"/><path d="M8.500 8H16l-3.500 6.500z" fill="#f07030"/><path d="M8.500 8l4 6.500h-8z" fill="#e030a0"/><path d="M8.500 8l-4 6.500L1 8z" fill="#4048e0"/><circle cx="8.500" cy="8" r="2.500" fill="#fff" opacity=".8"/></svg></button>
      <i class="more">»</i>
    </div>
    <div class="frame"></div>
  </aside>
  <svg class="arrow" width="114" height="66" viewBox="0 0 114 66" aria-hidden="true"><path d="M8 7L88 51" stroke="#e60808" stroke-width="11" stroke-linecap="round"/><path d="M92 34l21 30-37-1 12-10z" fill="#e60808"/></svg>
</main>

<footer class="status">
  <a href="#">www.tol.com.gr</a>
  <div class="s-mid"><svg width="14" height="14"><use href="#sheetblue"/></svg><svg width="8" height="6" viewBox="0 0 8 6"><path d="M1 1l3 3 3-3" fill="none" stroke="#444"/></svg><svg width="17" height="14" viewBox="0 0 17 14"><path d="M1 2h2M1 5h2M1 8h2M1 11h2M5 2h12M5 5h12M5 8h12M5 11h12" stroke="#2c55c0" stroke-width="1.500"/></svg><span>ΕΥΡΩΚΩΔΙΚΕΣ | Ιδιομορφική | Κ.Π.Μ. | q=2.65 | Σχεδιασμού | Τύπος 1</span></div>
  <span class="proj">Νέο Έργο</span>
  <svg class="lock" width="13" height="16" viewBox="0 0 13 16"><path d="M3 8V5a3.500 3.500 0 017 0v3" fill="none" stroke="#a8905c" stroke-width="2"/><path d="M1 7h11v8H1z" fill="#f0c048" stroke="#98701c"/><path d="M6 9h1.500v4H6z" fill="#604008"/></svg>
  <div class="s-right"><button>κάναβος</button><svg width="8" height="6" viewBox="0 0 8 6"><path d="M1 1l3 3 3-3" fill="none" stroke="#444"/></svg><button>έλξη</button><button class="boxed">dxf</button><button>έλξη</button><button class="boxed">κάθετα</button></div>
  <div class="zoom"><button aria-label="Σμίκρυνση">−</button><input type="range" value="50" aria-label="Ζουμ"><button aria-label="Μεγέθυνση">+</button></div>
</footer>
<script src="app.js"></script>
</body>
</html>
```
FILE: styles.css
```css
* { box-sizing: border-box; }
body { margin: 0; height: 100vh; min-width: 1640px; display: flex; flex-direction: column; overflow: hidden; background: #f0f0f0; color: #444; font: 12px/16px "Noto Sans", "Open Sans", sans-serif; }
.defs { position: absolute; width: 0; height: 0; }
button { font: inherit; color: inherit; background: none; border: 0; padding: 0; white-space: nowrap; }
input, select { font: inherit; color: #222; margin: 0; }
h1, h2, ul { margin: 0; padding: 0; font-weight: normal; }
a { color: inherit; text-decoration: none; }
svg { flex: none; }
select { appearance: none; border: 1px solid #c6c6c6; border-radius: 0; padding: 0 14px 0 2px; height: 20px; min-width: 0; text-overflow: clip; overflow: hidden; background: #fff url("data:image/svg+xml,%3Csvg xmlns='http://www.w3.org/2000/svg' width='5' height='3'%3E%3Cpath d='M0 0h5L2.500 3z' fill='%23666'/%3E%3C/svg%3E") no-repeat right 4px center; }
.sep { flex: none; width: 1px; background: #d0d0d0; }

/* title row */
.topbar { position: relative; flex: none; height: 29px; display: flex; background: #2b579a; color: #fff; }
.swirl { position: absolute; right: 0; top: 0; width: 430px; height: 29px; }
.tabs { display: flex; padding-top: 3px; }
.tabs button { padding: 3px 14px; }
.tabs .file { padding-left: 17px; padding-right: 26px; }
.tabs .active { background: #f0f0f0; color: #2b6cc4; }
.tabs .context { background: #26497f; margin-top: -3px; padding-top: 6px; }
.tell { display: flex; align-items: center; gap: 14px; padding: 2px 0 0 26px; }
.tell input { width: 200px; border: 0; background: none; color: #d5e0f0; padding: 0; }
.product { position: relative; margin-left: auto; display: flex; align-items: center; gap: 8px; padding: 2px 0 0; }

/* ribbon */
.ribbon { flex: none; height: 98px; display: flex; padding-top: 3px; border-bottom: 1px solid #cfcfcf; }
.group { display: flex; flex-direction: column; border-right: 1px solid #cfcfcf; margin-bottom: 2px; }
.g1 { width: 492px; } .g2 { width: 231px; } .g3 { width: 241px; } .g4 { width: 654px; }
.group h2 { margin-top: auto; text-align: center; color: #666; font-size: 12px; padding-bottom: 1px; white-space: nowrap; }
.group-body { display: flex; height: 72px; padding-top: 4px; }
.group-body .sep { margin: 4px 3px 0 3px; }
.big { display: flex; flex-direction: column; align-items: center; line-height: 15px; padding-bottom: 2px; }
.big > svg:first-child { margin: auto; }
.big > span { min-height: 30px; }
.big > svg:last-child { margin-top: -11px; margin-bottom: 5px; }
.big:disabled { color: #a8a8a8; }
.w54 { width: 56px; } .w56 { width: 56px; } .w60 { width: 58px; } .w64 { width: 68px; } .w78 { width: 75px; } .w80 { width: 84px; } .w126 { width: 127px; }
.g4 .w60 { margin-left: 5px; }
.fields { display: grid; grid-auto-rows: 21px; align-items: center; padding-top: 1px; }
.fields label { display: flex; align-items: center; gap: 4px; white-space: nowrap; }
.f1 { grid-template-columns: 78px 74px; padding-left: 4px; }
.f2 { grid-template-columns: 91px 49px; padding-left: 5px; }
.f3 { grid-template-columns: 54px 135px; padding-left: 4px; }
.f4 { grid-template-columns: 64px 85px; padding: 4px 0 0 4px; grid-auto-rows: 30px; }
.f4 select:disabled { background-color: #e6e6e6; }
.f4 input { margin-left: 16px; width: 69px; }
.f4 label { gap: 3px; }
.off { color: #a8a8a8; }
.ghost { color: #4a6880; }
.spin { width: 100%; height: 20px; border: 1px solid #c6c6c6; text-align: right; padding: 0 16px 0 2px; background: #fff url("data:image/svg+xml,%3Csvg xmlns='http://www.w3.org/2000/svg' width='6' height='11'%3E%3Cpath d='M0 3.500h6L3 0zM0 7.500h6L3 11z' fill='%23555'/%3E%3C/svg%3E") no-repeat right 5px center; }
.drop { grid-column: 1 / 3; display: flex; align-items: center; justify-content: space-between; padding-right: 4px; }
.radios { display: grid; grid-auto-rows: 21px; align-items: center; padding: 1px 0 0 7px; white-space: nowrap; }
.radios label { display: flex; align-items: center; gap: 5px; }
.radios input { appearance: none; width: 11px; height: 11px; border: 1px solid #888; background: #fff; }
.radios input[type=radio] { border-radius: 50%; }
.radios input[type=radio]:checked { background: radial-gradient(circle, #333 0 3px, #fff 3px); }
.stack { display: grid; grid-auto-rows: 21px; row-gap: 9px; padding: 6px 0 0 1px; width: 144px; }
.move { display: flex; align-items: center; gap: 3px; border: 1px solid #cfcfcf; padding-left: 3px; color: #a8a8a8; }
.xml { text-align: left; padding-left: 2px; }

/* panes */
.work { position: relative; flex: 1; min-height: 0; display: flex; background: #e6e6e6; }
.left { flex: none; width: 323px; padding-right: 6px; display: flex; flex-direction: column; border-right: 1px solid #bbb; }
.pane { display: flex; flex-direction: column; min-height: 0; }
.pane-title { flex: none; height: 41px; display: flex; align-items: center; justify-content: space-between; background: #e6e6e6; }
.pane-title h1 { font-size: 20px; line-height: 28px; padding-left: 1px; color: #505050; }
.ctl { display: flex; align-items: center; gap: 10px; padding-right: 5px; }
.tri { width: 9px; height: 5px; background: #666; clip-path: polygon(0 0, 100% 0, 50% 100%); }
.ctl button { display: flex; }
.view-pane { height: 485px; border-bottom: 1px solid #c4c4c4; }
.tools { flex: none; background: #f0f0f0; height: 54px; padding-bottom: 2px; }
.tool-row { display: flex; align-items: center; height: 26px; padding-left: 6px; gap: 1px; }
.tool-row button { width: 20px; height: 20px; margin-right: 1px; display: flex; align-items: center; justify-content: center; }
.scope { width: 66px; margin: 0 4px 0 2px; }
.tool-row .gap8, .select-tools .gap8 { margin-left: 7px; }
.cubes button { margin-right: 2px; }
.on { background: #cdcdcd; }
.tiny { width: 5px; height: 3px; background: #777; clip-path: polygon(0 0, 100% 0, 50% 100%); margin: 0 4px 0 2px; }
.tree { position: relative; background: #fff; overflow: hidden; font: 11px/17px "Noto Sans", sans-serif; color: #555; padding-top: 1px; border: 1px solid #e0e0e0; border-width: 1px 1px 1px 0; }
.tree::after { content: ""; position: absolute; right: 2px; top: 18px; width: 2px; height: 144px; background: #a8a8a8; }
.nav-tree::after { height: 118px; }
.view-tree { flex: 1; }
.tree li { list-style: none; display: grid; grid-template-columns: 19px 1fr; }
.tree ul ul { grid-column: 1 / 3; margin-left: 17px; background: linear-gradient(#c4c4c4, #c4c4c4) 7px 0 / 1px calc(100% - 8px) no-repeat; }
.tree label, .tree a { display: flex; align-items: center; height: 17px; gap: 3px; white-space: nowrap; }
.tree label svg, .tree a svg { width: 16px; height: 14px; }
.tree .dark { color: #111; }
.tree .sel { background: linear-gradient(90deg, #eee, #eee) 0 0 / 244px 100% no-repeat; }
.tree input { appearance: none; width: 11px; height: 11px; border: 1px solid #999; margin-right: 3px; background: #fff; }
.tree input:checked { background: #fff url("data:image/svg+xml,%3Csvg xmlns='http://www.w3.org/2000/svg' width='9' height='9'%3E%3Cpath d='M1 4.500l2.500 2.500L8 1.500' fill='none' stroke='%23666' stroke-width='1.500'/%3E%3C/svg%3E") center no-repeat; }
.tw { height: 17px; background: no-repeat 5px center; }
.tw.c { background-image: url("data:image/svg+xml,%3Csvg xmlns='http://www.w3.org/2000/svg' width='12' height='9'%3E%3Cpath d='M0 0h6v9H0z' fill='%23fff'/%3E%3Cpath d='M.5 1v7L5 4.500z' fill='%23fff' stroke='%23aaa'/%3E%3C/svg%3E"); }
.tw.o { background-image: url("data:image/svg+xml,%3Csvg xmlns='http://www.w3.org/2000/svg' width='12' height='9'%3E%3Cpath d='M0 0h6v9H0z' fill='%23fff'/%3E%3Cpath d='M6 2v5H0z' fill='%23888'/%3E%3C/svg%3E"); }
.tw.l { background-image: linear-gradient(#c4c4c4, #c4c4c4); background-size: 8px 1px; background-position: 8px center; }
.select-tools { flex: none; height: 28px; display: flex; align-items: center; gap: 6px; padding-left: 8px; background: #f0f0f0; border-bottom: 1px solid #ccc; }
.select-tools button { width: 16px; height: 14px; }
.ptabs { flex: none; display: flex; height: 22px; margin-bottom: 1px; }
.ptabs button { display: flex; align-items: center; gap: 3px; padding: 1px 4px 0 1px; }
.ptabs .active { background: #fff; border: 1px solid #ccc; border-top: 0; border-left: 0; }
.ptabs button + button { padding-left: 6px; }
.nav-pane { flex: 1; padding-top: 4px; }
.nav-pane .pane-title { height: 43px; }
.nav-tools { flex: none; height: 22px; display: flex; align-items: center; gap: 1px; padding-left: 7px; background: #f0f0f0; }
.nav-tools button { padding: 2px 3px; }
.nav-tools .ico { padding: 1px 2px; display: flex; }
.nav-tools .sep { height: 20px; margin: 0 4px; }
.nav-tree { flex: 1; margin-bottom: 1px; }

/* centre column */
.center { flex: 1; min-width: 0; display: flex; flex-direction: column; }
.strip { flex: none; height: 82px; background: #f0f0f0; border-bottom: 3px solid #e2e2e2; display: flex; flex-direction: column; justify-content: space-between; align-items: flex-end; padding: 7px 4px 7px 0; }
.strip i { width: 9px; height: 6px; background: #a0a0a0; clip-path: polygon(0 0, 100% 0, 50% 100%); }
.strip .up { clip-path: polygon(50% 0, 100% 100%, 0 100%); }
.canvas { position: relative; flex: 1; min-height: 0; background: #fff; border: 1px solid #777; border-width: 2px 1px 1px 1px; margin-right: 1px; }
#model { display: block; width: 100%; height: 100%; }
.triad { position: absolute; right: 0; top: 0; font: 12px "Noto Sans", sans-serif; }
.workwin { flex: none; padding-top: 3px; border-right: 1px solid #bbb; }
.workwin .pane-title { height: 45px; padding-top: 4px; }
.workwin .pane-title h1 { padding-left: 4px; }
.ww-tools { height: 23px; background: #f0f0f0; display: flex; gap: 2px; padding: 1px 0 1px 9px; }
.ww-tools button { padding: 0 3px; }
.grid-wrap { position: relative; background: #f0f0f0; border: 1px solid #666; border-left: 0; }
.grid-wrap::after { content: ""; position: absolute; right: 6px; top: 16px; width: 2px; height: 44px; background: #a8a8a8; }
.grid { border-collapse: collapse; table-layout: fixed; width: 751px; font-size: 11px; line-height: 15px; color: #111; }
.c35 { width: 35px; } .c50 { width: 50px; } .c65 { width: 65px; } .c80 { width: 80px; } .c60 { width: 60px; }
.grid th { font-weight: normal; padding: 0 1px; border: 1px solid #222; background: #f0f0f0; height: 22px; }
.grid td { border: 1px solid #777; background: #fff; padding: 0 3px 0 2px; height: 20px; }
.grid tbody th { text-align: right; height: 20px; }
.grid tr:first-child th { border-top: 0; }
.grid tbody tr:last-child > * { border-bottom: 0; }
.grid td:nth-child(3), .grid td:nth-child(n+9) { color: #777; }
.grid td:nth-child(4), .grid td:nth-child(5), .grid td:nth-child(13) { text-align: center; }
.grid td:nth-child(n+8):nth-child(-n+12) { text-align: right; }
.grid .hot td { background: #ffe6a0; }
.grid input { appearance: none; display: block; width: 12px; height: 12px; margin: 0 auto; border: 1px solid #111; background: #fff url("data:image/svg+xml,%3Csvg xmlns='http://www.w3.org/2000/svg' width='10' height='10'%3E%3Cpath d='M2 2l6 6M8 2L2 8' stroke='%23000' stroke-width='2'/%3E%3C/svg%3E") center no-repeat; }
.wtabs { display: flex; height: 24px; padding-bottom: 1px; border-bottom: 1px solid #c4c4c4; }
.wtabs button { display: flex; align-items: center; gap: 2px; padding: 2px 4px 0; }
.wtabs .active { background: #fff; border: 1px solid #ccc; border-top: 0; }

/* analysis pane */
.right { position: relative; flex: none; width: 397px; padding: 4px 6px 5px 5px; display: flex; flex-direction: column; background: #f0f0f0; border-left: 3px solid #e6e6e6; }
.frame { position: absolute; inset: -3px 0 0 0; border: 5px solid #e01010; pointer-events: none; }
.right .pane-title { height: 41px; }
.right .pane-title h1 { padding-left: 3px; }
.an-tools { flex: none; height: 29px; display: flex; align-items: center; gap: 6px; padding: 0 0 4px 13px; font-size: 11px; }
.an-tools select { width: 96px; margin-left: 1px; }
.an-tools button { display: flex; }
.an-tools .sep { height: 20px; }
.chart { flex: none; height: 293px; background: #fff; }
#chart { display: block; width: 100%; height: 293px; font-family: Lato, "Noto Sans", sans-serif; }
.props-wrap { flex: none; margin-top: 5px; padding-right: 8px; border-top: 1px solid #bbb; background: linear-gradient(#f0f0f0, #f0f0f0) 0 0 / 100% 20px no-repeat, #fff; }
.props { border-collapse: separate; border-spacing: 0; table-layout: fixed; width: 100%; font: 11px/16px "Noto Sans", sans-serif; color: #333; }
.pk { width: 156px; }
.props th, .props td { text-align: left; font-weight: normal; padding: 0 0 0 4px; height: 17px; white-space: nowrap; border-bottom: 1px solid #ececec; }
.props thead th { height: 20px; background: #f0f0f0; border-bottom: 1px solid #ccc; }
.props thead th + th { border-left: 1px solid #bbb; }
.props td:first-child { border-left: 16px solid #eee; border-right: 1px solid #ececec; }
.props thead th:first-child, .props .root td:first-child { border-left: 0; padding-left: 3px; }
.props .sub td:first-child { padding-left: 16px; }
.props .cat th { font-weight: bold; background: #eee url("data:image/svg+xml,%3Csvg xmlns='http://www.w3.org/2000/svg' width='6' height='5'%3E%3Cpath d='M6 0v5H0z' fill='%23999'/%3E%3C/svg%3E") 5px center no-repeat; padding-left: 20px; border-bottom-color: #eee; }
.props .dim { color: #a8a8a8; }
.props .strong { color: #111; }
.filler { flex: 1; margin-top: 5px; border-top: 1px solid #ccc; }
.grip { flex: none; height: 8px; background: repeating-linear-gradient(90deg, #f4f4f4 0 3px, #a8a8a8 3px 4px, #cdcdcd 4px 6px) center / 60px 3px no-repeat, #cdcdcd; }
.iconbar { flex: none; height: 25px; display: flex; justify-content: flex-end; }
.iconbar button { width: 25px; padding-top: 5px; display: flex; align-items: center; justify-content: center; }
.more { width: 10px; margin-left: 6px; padding-top: 4px; font-style: normal; font-size: 12px; line-height: 12px; color: #777; }
.arrow { position: absolute; right: 393px; top: 137px; pointer-events: none; }

/* status */
.status { flex: none; height: 20px; overflow: hidden; display: grid; grid-template-columns: 447px 519px 407px 198px 1fr 125px; align-items: start; background: #f0f0f0; border-top: 1px solid #ccc; padding-left: 6px; }
.status > * { height: 26px; display: flex; align-items: center; white-space: nowrap; }
.status > svg { height: 20px; margin-top: 2px; }
.s-mid { gap: 5px; }
.s-mid span { margin-left: 8px; }
.s-right { gap: 7px; }
.s-right .boxed { border: 1px solid #2b579a; background: #d0d0d0; padding: 3px 2px; margin: 4px -4px 0 0; }
.zoom { gap: 6px; font-size: 16px; color: #777; }
.zoom input { appearance: none; width: 86px; height: 20px; background: linear-gradient(#999, #999) center / 100% 1px no-repeat; }
.zoom input::-webkit-slider-thumb { appearance: none; width: 5px; height: 15px; background: #666; }
```
FILE: app.js
```js
// Spectrum chart
(function () {
  const X0 = 70, Y0 = 225, UX = 69.5, UY = 14.3;
  const px = t => (X0 + t * UX).toFixed(1), py = s => (Y0 - s * UY).toFixed(1);
  let out = '';
  for (let t = 0; t <= 4.26; t += 0.25) out += `<path d="M${px(t)} 25V225" stroke="${t % 0.5 ? '#e6e6e6' : '#cfcfcf'}"/>`;
  for (let s = 0; s <= 14; s += 2) out += `<path d="M70 ${py(s)}H376" stroke="#cfcfcf"/><text x="60" y="${+py(s) + 4}" text-anchor="end" font-size="12">${s}</text><path d="M64 ${py(s)}h6" stroke="#222"/>`;
  for (let s = 0.4; s < 14; s += 0.4) out += `<path d="M67 ${py(s)}h3" stroke="#444"/>`;
  const curve = (f, a, b) => { let d = ''; for (let t = a; t <= b + 0.001; t += 0.05) d += (d ? 'L' : 'M') + px(t) + ' ' + py(f(t)); return d; };
  const se = t => t <= .2 ? 5 + t / .2 * 7.55 : t <= .6 ? 12.55 : t <= 2.5 ? 7.53 / t : 18.82 / t / t;
  const sd = t => t <= .2 ? 2.8 + t / .2 * 1.15 : t <= .6 ? 3.95 : Math.max(.73, t <= 2.5 ? 2.37 / t : 5.93 / t / t);
  const sv = t => t <= .05 ? 2.2 + t / .05 * 3.27 : t <= .151 ? 5.47 : Math.max(.66, t <= 1 ? .82 / t : .82 / t / t);
  const area = (f, fill, stroke) => { const d = curve(f, 0, 4); return `<path d="${d}V225H70Z" fill="${fill}"/><path d="${d}" fill="none" stroke="${stroke}" stroke-width="1.500"/>`; };
  out += area(sd, 'rgba(80,120,240,.35)', '#2c50b8') + area(sv, 'rgba(240,90,90,.33)', '#b83c44');
  const line = (d, dash) => `<path d="${d}" fill="none" stroke="#4a5a20" stroke-width="1.600" ${dash ? 'stroke-dasharray="6 2"' : ''}/>`;
  out += line(curve(se, 0, .2), 1) + line(curve(se, .2, .6)) + line(curve(se, .6, 1.05), 1) + line(curve(se, 1.05, 4));
  out += '<path d="M70 25V229M70 225H376" stroke="#111" fill="none"/>';
  for (let t = 0; t <= 4.26; t += 0.25) out += `<path d="M${px(t)} 225v${t % 0.5 ? 3 : 6}" stroke="#222"/>`;
  for (let t = 0; t <= 4; t += 0.5) out += `<text x="${px(t)}" y="248" text-anchor="middle" font-size="12">${t}</text>`;
  out += '<text x="223" y="280" text-anchor="middle" font-size="18">T(sec)</text><text transform="translate(32 141) rotate(-90)" text-anchor="middle" font-size="18">Sd(m/s²)</text>';
  out += '<path d="M209.500 20.500H382V91.500H209.500z" fill="#fff" fill-opacity=".9" stroke="#d8d8d8"/><path d="M220 32h28v10h-28z" fill="#c0cffa" stroke="#2c50b8" stroke-width="1.500"/><path d="M220 51h28v10h-28z" fill="#f9c8c8" stroke="#b83c44" stroke-width="1.500"/><path d="M219 75h31" stroke="#4a5a20" stroke-width="1.500" stroke-dasharray="5 2"/><g font-size="11"><text x="252" y="41">Sd(T)x,y</text><text x="252" y="60">Svd</text><text x="252" y="79">Se(T)x,y - TR=475 χρόνια</text></g>';
  document.getElementById('chart').innerHTML = out;
})();

// Building model: oblique projection, six storeys on a 7 x 3 bay plan
(function () {
  const H = 52.300;
  const U = [0, 50, 100, 150, 200, 276, 326, 376];
  const D = [[0, 0], [-50, -27], [-84, -45.300], [-135, -72.700]];
  const P = (u, d, z) => [478 + u + D[d][0], 513 - u * 0.239 + D[d][1] - z * H];
  const poly = (pts, fill, op, stroke) => `<path d="M${pts.map(p => p[0].toFixed(1) + ' ' + p[1].toFixed(1)).join('L')}Z" fill="${fill}" fill-opacity="${op}" ${stroke ? `stroke="${stroke}" stroke-opacity=".55" stroke-width=".8"` : ''}/>`;
  const sh = (p, x, y) => [p[0] + x, p[1] + y];
  let out = '';
  // a bar between two nodes: top face plus a side face of depth h
  const bar = (a, b, w, h, top, side, op, st) => {
    const along = Math.abs(b[1] - a[1]) / Math.abs(b[0] - a[0]) < .4;
    const o = along ? [w, w * .54] : [w, -w * .24];
    const m = [sh(a, -o[0], -o[1]), sh(b, -o[0], -o[1]), sh(b, o[0], o[1]), sh(a, o[0], o[1])];
    const s = along ? [m[3], m[2]] : [m[0], m[1]];
    return poly(m, top, op, st) + poly([s[0], s[1], sh(s[1], 0, h), sh(s[0], 0, h)], side, op, st) +
      `<path d="M${a[0]} ${a[1]}L${b[0]} ${b[1]}M${s[0][0]} ${s[0][1] + h * .5}L${s[1][0]} ${s[1][1] + h * .5}" stroke="${st}" stroke-opacity=".5" stroke-width=".8" stroke-dasharray="5 2"/>`;
  };
  const pad = (p, w, c, op) => poly([sh(p, -w * 1.200, 0), sh(p, w * .2, -w * .35), sh(p, w * 1.200, w * .1), sh(p, -w * .2, w * .45)], c, op, '#301060') +
    poly([sh(p, -w * 1.200, 0), sh(p, -w * .2, w * .45), sh(p, w * 1.200, w * .1), sh(p, w * 1.200, w * .1 + 7), sh(p, -w * .2, w * .45 + 7), sh(p, -w * 1.200, 7)], c, op, '#301060');
  const col = (u, d, c, op, w) => {
    const t = P(u, d, 6), b = P(u, d, 0);
    return poly([sh(t, -w, -2), sh(t, 0, -5), sh(t, w, -2), sh(b, w, 0), sh(b, 0, 3), sh(b, -w, 0)], c, op) +
      `<path d="M${t[0]} ${t[1]}V${b[1]}" stroke="#004c00" stroke-opacity=".35"/>`;
  };

  // foundation grid
  [3, 2, 1, 0].forEach(d => { out += bar(P(-6, d, 0), P(376, d, 0), 8, 9, '#4a9faa', '#1f7886', .78, '#0b5562'); });
  U.forEach(u => { out += bar(P(u, 3, 0), P(u, 0, 0), 8, 8, '#4a9faa', '#1f7886', .78, '#0b5562'); });
  out += bar([330, 444], [376, 468], 9, 11, '#4a9faa', '#1f7886', .78, '#0b5562');
  out += bar([430, 490], [474, 513], 11, 14, '#4a9faa', '#1f7886', .78, '#0b5562');
  out += poly([[378, 455], [418, 444], [470, 470], [427, 481]], '#a468b8', .8, '#602070');
  out += poly([[378, 455], [427, 481], [427, 492], [378, 466]], '#b878c8', .8, '#602070');
  [[0, 3], [376, 0], [376, 3], [326, 3]].forEach(c => { out += pad(sh(P(c[0], c[1], 0), c[0] ? 5 : -6, 0), 20, '#b060b8', .6); });
  [3, 2, 1, 0].forEach(d => U.forEach(u => { out += pad(P(u, d, 0), 19, '#43208c', .72); }));

  // rear columns
  const rear = op => {
    U.slice(3).forEach(u => { if (u !== 150) out += col(u, 3, '#008a3a', op, 5); });
    [150, 200, 376].forEach(u => { out += col(u, 2, '#008a3a', op * .8, 5); });
    out += col(150, 3, '#008a3a', op * .8, 5);
  };
  rear(.95);

  // left end column and rear shear wall
  const wall = (x, y, w, h, c, op) => {
    let s = poly([[x, y], [x + w, y - w * .1], [x + w, y + h], [x, y + h + w * .1]], c, op);
    for (let i = 0; i <= w; i += 5) s += `<path d="M${x + i} ${y + 1}v${h}" stroke="#0a8a18" stroke-opacity=".5" stroke-width=".8" stroke-dasharray="5 1"/>`;
    return s;
  };
  out += wall(341, 128, 17, 308, '#30c830', .7) + wall(461, 96, 19, 312, '#228a50', .85) + wall(396, 110, 34, 330, '#2cd02c', .6);

  // storeys from the lowest up
  for (let z = 1; z <= 6; z++) {
    for (let d = 2; d >= 0; d--) for (let i = 0; i < 7; i++)
      out += poly([P(U[i], d, z), P(U[i + 1], d, z), P(U[i + 1], d + 1, z), P(U[i], d + 1, z)], '#aee2e8', i < 1 && d < 2 ? .2 : .55);
    U.forEach(u => { out += bar(P(u, 3, z), P(u, 0, z), 4, 9, '#3090dc', '#2468f0', .62, '#0848c8'); });
    [3, 2, 1].forEach(d => { out += bar(P(0, d, z), P(376, d, z), 5, 9, '#1f90dc', '#1560ec', .66, '#0848c8'); });
  }
  rear(.4);
  out += wall(461, 96, 19, 120, '#228a50', .4);
  U.slice(1).forEach(u => { out += col(u, 1, '#007c3a', u > 200 ? .9 : .6, 5); });

  // green shear wall at the left end
  out += wall(391, 154, 39, 306, '#12cc12', .82) + poly([[430, 110], [452, 132], [452, 440], [430, 446]], '#2cd02c', .3);
  out += poly([[396, 112], [430, 102], [430, 154], [396, 160]], '#2cd02c', .45);

  // front frame
  U.forEach(u => { out += col(u, 0, '#007a00', .95, 5); });
  for (let z = 1; z <= 6; z++) {
    out += bar(P(0, 0, z), P(376, 0, z), 5, 10, '#1864f0', '#0a3cf4', .68, '#0030c0');
    out += bar(P(0, 1, z), P(0, 0, z), 4, 11, '#2060f0', '#1850f0', .8, '#0030c0');
  }
  U.forEach(u => { out += col(u, 0, '#007a00', .85, 5); });

  // slab marks
  [[90, 1], [150, 1], [230, 1], [300, 0], [350, 1], [20, 2], [110, 2], [250, 2]].forEach(m => {
    const p = sh(P(m[0], m[1], 6), -25, -14);
    out += `<path d="M${p[0]} ${p[1]}l5 2-5 2z" fill="#0a98b0"/>`;
  });
  out += '<path d="M712 486q4-4 9 0" stroke="#c03040" fill="none"/>';
  document.getElementById('model').innerHTML = out;
})();
```
